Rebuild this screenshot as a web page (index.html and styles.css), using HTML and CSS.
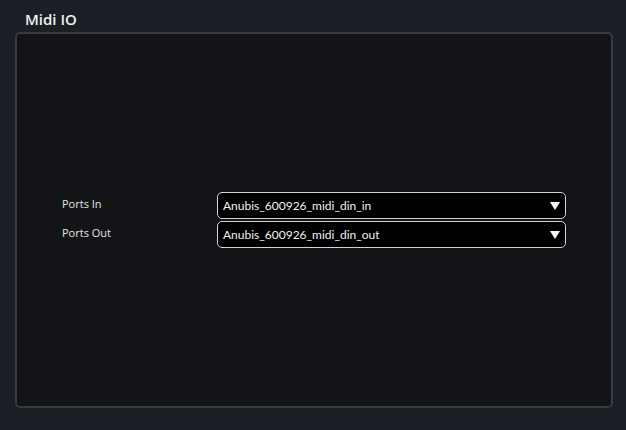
FILE: index.html
```html
<!DOCTYPE html>
<html>
<head>
<meta charset="utf-8">
<link rel="stylesheet" href="styles.css">
</head>
<body>
<div class="app">
  <h1 class="title">Midi IO</h1>
  <div class="panel">
    <div class="form">
      <div class="label">Ports In</div>
      <div class="combo"><span class="value">Anubis_600926_midi_din_in</span><span class="arrow"></span></div>
      <div class="label">Ports Out</div>
      <div class="combo"><span class="value">Anubis_600926_midi_din_out</span><span class="arrow"></span></div>
    </div>
  </div>
</div>
</body>
</html>
```

FILE: styles.css
```css
html, body {
  margin: 0;
  padding: 0;
  background: #1b1e25;
}
body {
  width: 626px;
  height: 430px;
  overflow: hidden;
  font-family: "Open Sans", "Noto Sans", sans-serif;
  color: #e6e6e6;
}
.app {
  display: flex;
  flex-direction: column;
  padding: 0 13px 0 15px;
  height: 430px;
  box-sizing: border-box;
}
.title {
  margin: 0;
  padding: 9px 0 0 10px;
  height: 32px;
  box-sizing: border-box;
  font-size: 15px;
  font-weight: 600;
  line-height: 20px;
  color: #f0f0f0;
}
.panel {
  height: 376px;
  flex: none;
  box-sizing: border-box;
  border: 2px solid #3a3b40;
  border-radius: 5px;
  background: #131418;
  display: flex;
  flex-direction: column;
  justify-content: center;
  padding: 0 45px;
}
.form {
  display: grid;
  grid-template-columns: 155px 1fr;
  row-gap: 2px;
  align-items: center;
}
.label {
  font-size: 11px;
  color: #e4e4e4;
  padding-bottom: 4px;
}
.combo {
  height: 27px;
  box-sizing: border-box;
  border: 1px solid #d4d4d4;
  border-radius: 5px;
  background: #000;
  display: flex;
  align-items: center;
  justify-content: space-between;
  padding: 0 5px 0 5px;
  font-family: "Lato", "Open Sans", sans-serif;
  font-size: 12px;
  color: #f2f2f2;
}
.arrow {
  width: 0;
  height: 0;
  border-left: 5px solid transparent;
  border-right: 5px solid transparent;
  border-top: 8px solid #f5f5f5;
  margin-top: 1px;
}
```
